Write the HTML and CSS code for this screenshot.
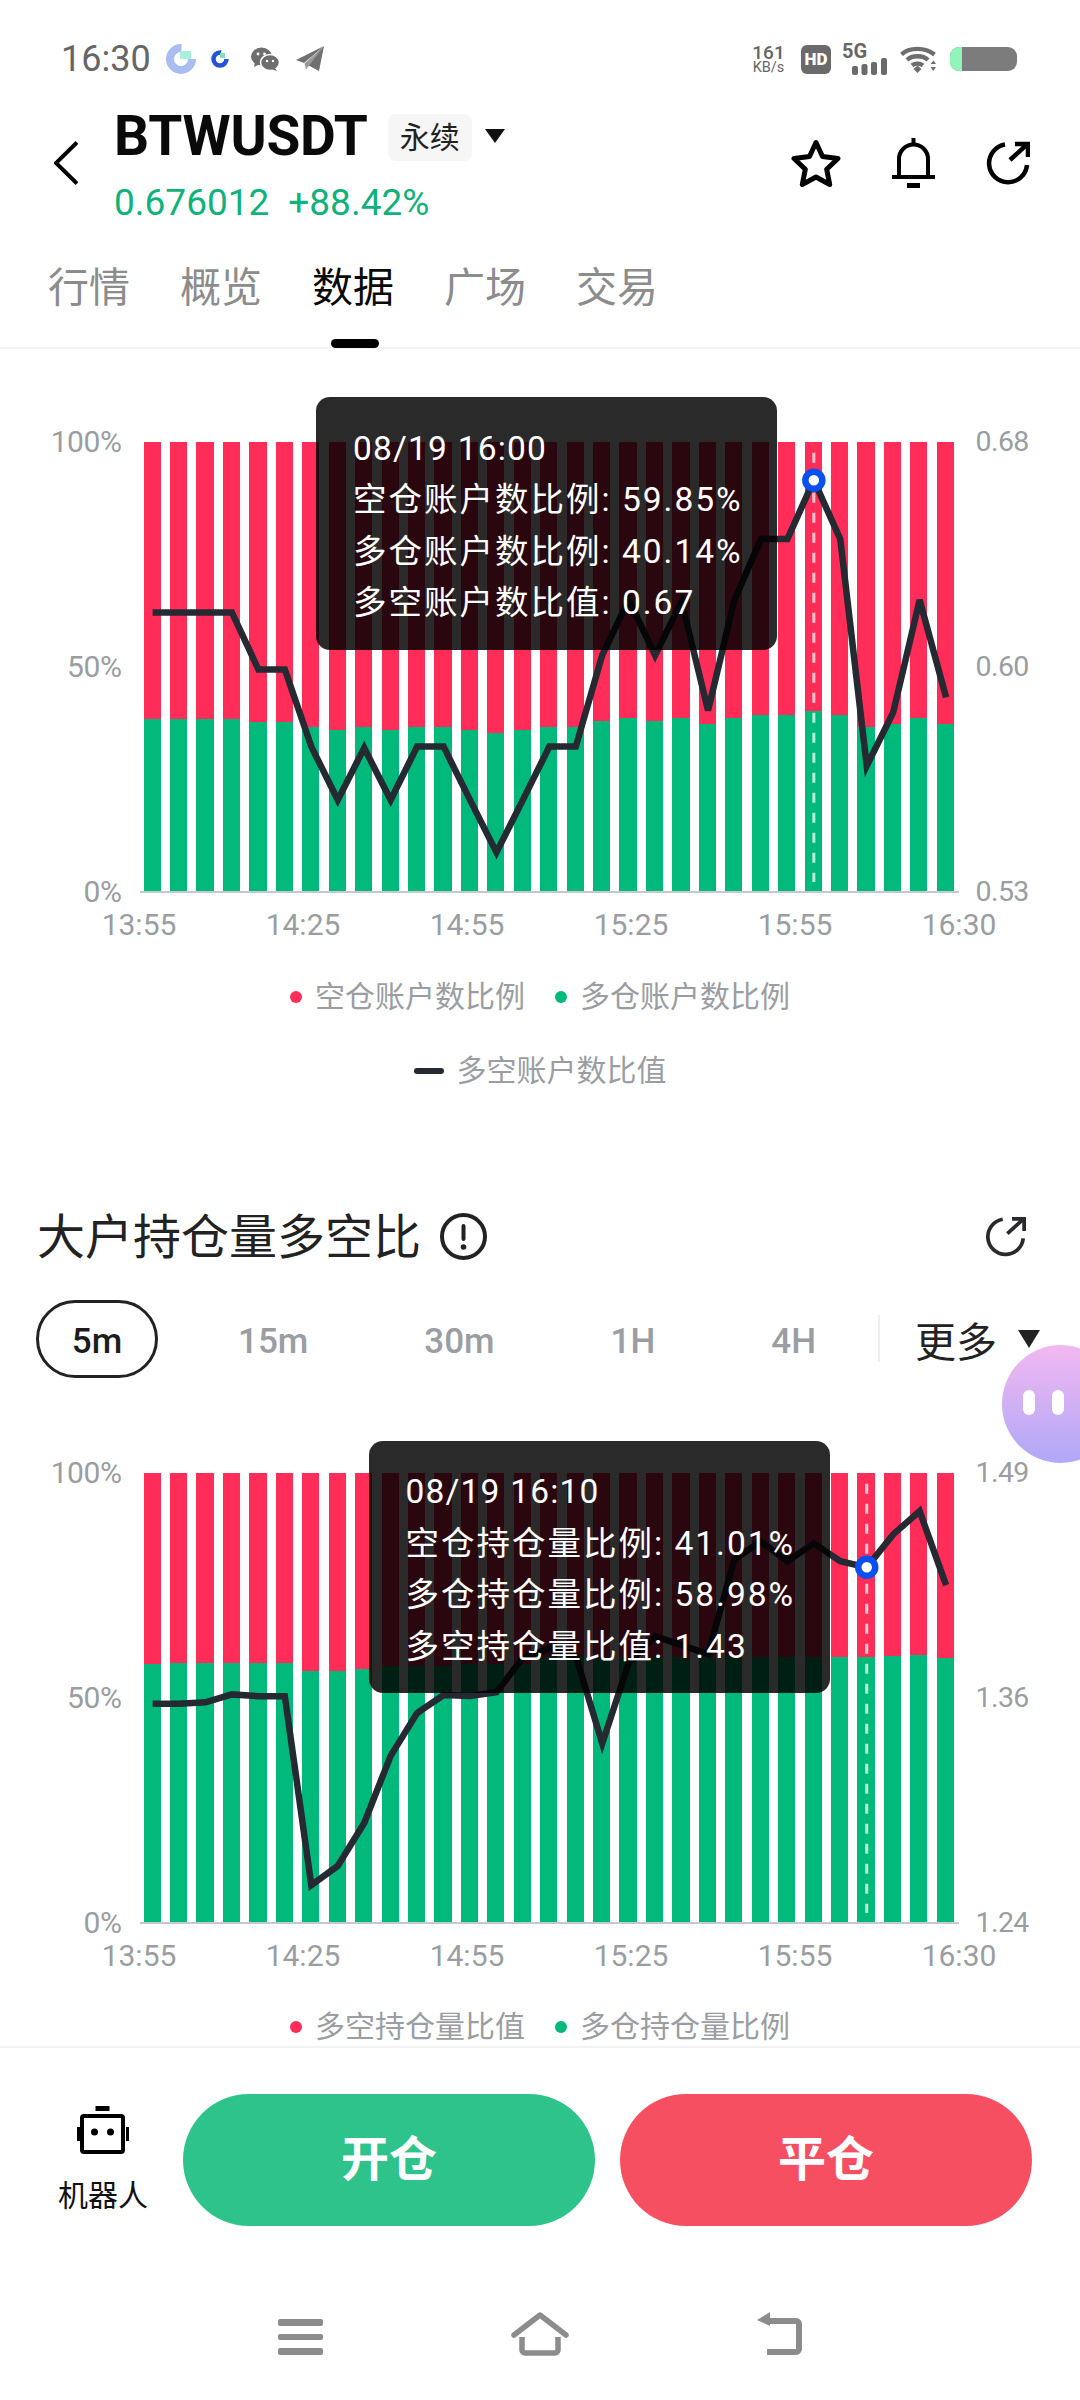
FILE: index.html
```html
<!DOCTYPE html>
<html lang="zh">
<head>
<meta charset="utf-8">
<title>BTWUSDT</title>
<link rel="stylesheet" href="styles.css">
</head>
<body>
<div class="app">
  <div class="status">
    <span class="time">16:30</span>
    <svg class="ic-ring" viewBox="0 0 30 30"><circle cx="15" cy="15" r="11" fill="none" stroke="#a9bdf0" stroke-width="8" stroke-dasharray="52 17.1"/><rect x="14" y="7" width="11" height="8" fill="#a8f0dc"/></svg>
    <svg class="ic-ring2" viewBox="0 0 18 18"><circle cx="9" cy="9" r="6.5" fill="none" stroke="#2453d6" stroke-width="4.5" stroke-dasharray="31 10"/><rect x="9" y="3" width="5" height="5" fill="#7fe0c0"/></svg>
    <svg class="ic-wechat" viewBox="0 0 28 24"><ellipse cx="10.5" cy="9.5" rx="10.5" ry="9" fill="#6e6e6e"/><path d="M4 15l-1 5 6-3z" fill="#6e6e6e"/><ellipse cx="19" cy="15.5" rx="9.5" ry="8" fill="#6e6e6e" stroke="#fff" stroke-width="1.5"/><path d="M24 21l2 3-6-2z" fill="#6e6e6e"/><circle cx="7" cy="7" r="1.4" fill="#fff"/><circle cx="13.5" cy="7" r="1.4" fill="#fff"/><circle cx="16" cy="14" r="1.2" fill="#fff"/><circle cx="22" cy="14" r="1.2" fill="#fff"/></svg>
    <svg class="ic-tele" viewBox="0 0 28 26"><path d="M28 0L0 14l8 3z" fill="#707070"/><path d="M28 0L10 18l13 7z" fill="#707070"/><path d="M28 0L8.5 17.5l1.5 6 3-4z" fill="#9a9a9a"/></svg>
    <div class="status-right">
      <div class="speed"><b>161</b><span>KB/s</span></div>
      <div class="hd">HD</div>
      <div class="net"><span>5G</span><svg viewBox="0 0 35 17" class="sig"><rect x="0" y="8" width="6" height="9" rx="2"/><rect x="9.500" y="6" width="6" height="11" rx="2"/><rect x="19" y="4" width="6" height="13" rx="2"/><rect x="29" y="0" width="6" height="17" rx="2"/></svg></div>
      <svg class="wifi" viewBox="0 0 36 28"><g fill="none" stroke="#6e6e6e" stroke-width="4.400"><path d="M1.500 9.500C9 2 25 2 34.500 9.500"/><path d="M7 15C12 10 23 10 28 15"/><path d="M12 20.500C15 18 20 18 23 20.500"/></g><path d="M13.500 24l4-3.500 4 3.500-4 4z" fill="#6e6e6e"/><path d="M30.500 19l3-3.500 2.500 3.500zM30.500 22h5.500l-2.700 4z" fill="#6e6e6e"/></svg>
      <div class="batt"><i></i></div>
    </div>
  </div>

  <div class="head">
    <svg class="back" viewBox="0 0 24 44"><path d="M23 1.500L2 22l21 20.500" fill="none" stroke="#000" stroke-width="4"/></svg>
    <div class="sym">
      <div class="sym-row">
        <span class="sym-name">BTWUSDT</span>
        <span class="tag">永续</span>
        <i class="caret"></i>
      </div>
      <div class="price"><span>0.676012</span><span>+88.42%</span></div>
    </div>
    <div class="head-icons">
      <svg class="ic-star" viewBox="0 0 50 48"><path d="M25 3.500l6.500 14 15.500 2-11.300 10.700 3 15.300L25 38l-13.700 7.500 3-15.300L3 19.500l15.500-2z" fill="none" stroke="#000" stroke-width="5" stroke-linejoin="round"/></svg>
      <svg class="ic-bell" viewBox="0 0 43 50"><g fill="none" stroke="#000" stroke-width="4"><path d="M7 38V21a14.500 14.500 0 0 1 29 0v17"/><path d="M0 39h43"/><path d="M21.500 0v6"/></g><rect x="15" y="45" width="13" height="5"/></svg>
      <svg class="ic-share" viewBox="0 0 44 44"><g fill="none" stroke="#000" stroke-width="4.500"><path d="M19 3.500A19 19 0 1 0 41 24"/><path d="M24 19L41.500 3"/><path d="M29 3h13v13"/></g></svg>
    </div>
  </div>

  <div class="tabs">
    <span class="tab">行情</span>
    <span class="tab">概览</span>
    <span class="tab on">数据</span>
    <span class="tab">广场</span>
    <span class="tab">交易</span>
  </div>

  <div class="content">
    <section class="sec-first">
      <div class="chart">
        <div class="yaxis left"><span>100%</span><span>50%</span><span>0%</span></div>
        <div class="plot">
          <div class="bar"><i style="height:38.5%"></i></div><div class="bar"><i style="height:38.5%"></i></div><div class="bar"><i style="height:38.5%"></i></div><div class="bar"><i style="height:38.5%"></i></div><div class="bar"><i style="height:37.7%"></i></div><div class="bar"><i style="height:37.7%"></i></div><div class="bar"><i style="height:36.7%"></i></div><div class="bar"><i style="height:36%"></i></div><div class="bar"><i style="height:36.7%"></i></div><div class="bar"><i style="height:36%"></i></div><div class="bar"><i style="height:36.7%"></i></div><div class="bar"><i style="height:36.7%"></i></div><div class="bar"><i style="height:36%"></i></div><div class="bar"><i style="height:35.2%"></i></div><div class="bar"><i style="height:36%"></i></div><div class="bar"><i style="height:36.7%"></i></div><div class="bar"><i style="height:36.7%"></i></div><div class="bar"><i style="height:37.9%"></i></div><div class="bar"><i style="height:38.7%"></i></div><div class="bar"><i style="height:37.9%"></i></div><div class="bar"><i style="height:38.7%"></i></div><div class="bar"><i style="height:37.2%"></i></div><div class="bar"><i style="height:38.7%"></i></div><div class="bar"><i style="height:39.4%"></i></div><div class="bar"><i style="height:39.4%"></i></div><div class="bar"><i style="height:40.1%"></i></div><div class="bar"><i style="height:39.4%"></i></div><div class="bar"><i style="height:36.6%"></i></div><div class="bar"><i style="height:37.2%"></i></div><div class="bar"><i style="height:38.7%"></i></div><div class="bar"><i style="height:37.4%"></i></div>
          <svg class="overlay" viewBox="0 0 810.7 450">
            <path class="cross" d="M669.850 10.700V440"/>
            <polyline class="line" points="8.600,170.400 35.050,170.400 61.500,170.400 87.950,170.400 114.400,227.500 140.850,227.500 167.300,304.600 193.750,357.900 220.200,306 246.650,357.900 273.100,304.600 299.550,304.600 326,357.900 352.450,410.400 378.900,357.900 405.350,304.600 431.800,304.600 458.250,213.200 484.700,157.900 511.150,213.200 537.600,159.600 564.050,268.600 590.500,157.900 616.950,97.100 643.400,97.100 669.850,38.200 696.300,97.100 722.750,323.900 749.200,270.400 775.650,157.900 802.100,255.400"/>
            <circle class="dot" cx="669.850" cy="38.200" r="8.500"/>
          </svg>
        </div>
        <div class="yaxis right"><span>0.68</span><span>0.60</span><span>0.53</span></div>
        <div class="xaxis"><span>13:55</span><span>14:25</span><span>14:55</span><span>15:25</span><span>15:55</span><span>16:30</span></div>
        <div class="tip tip-a">
          <div class="tip-date">08/19 16:00</div>
          <div>空仓账户数比例: 59.85%</div>
          <div>多仓账户数比例: 40.14%</div>
          <div>多空账户数比值: 0.67</div>
        </div>
      </div>
      <div class="legend"><span class="li"><i class="d red"></i>空仓账户数比例</span><span class="li"><i class="d green"></i>多仓账户数比例</span></div>
      <div class="legend two"><span class="li"><i class="dash"></i>多空账户数比值</span></div>
    </section>

    <section>
      <div class="sec-title">
        <h2>大户持仓量多空比</h2>
        <svg class="ic-info" viewBox="0 0 47 47"><circle cx="23.500" cy="23.500" r="21.500" fill="none" stroke="#222" stroke-width="4"/><rect x="21.500" y="11" width="4" height="17" rx="2" fill="#222"/><circle cx="23.500" cy="34" r="2.800" fill="#222"/></svg>
        <svg class="ic-share sm" viewBox="0 0 44 44"><g fill="none" stroke="#2a2a2e" stroke-width="4"><path d="M19 3.500A19 19 0 1 0 41 24"/><path d="M24 19L41.500 3"/><path d="M29 3h13v13"/></g></svg>
      </div>
      <div class="periods">
        <span class="pill">5m</span>
        <span class="per">15m</span>
        <span class="per">30m</span>
        <span class="per">1H</span>
        <span class="per">4H</span>
        <i class="sep"></i>
        <span class="more">更多</span>
        <i class="more-caret"></i>
      </div>
      <div class="chart">
        <div class="yaxis left"><span>100%</span><span>50%</span><span>0%</span></div>
        <div class="plot">
          <div class="bar"><i style="height:57.5%"></i></div><div class="bar"><i style="height:57.6%"></i></div><div class="bar"><i style="height:57.6%"></i></div><div class="bar"><i style="height:57.6%"></i></div><div class="bar"><i style="height:57.6%"></i></div><div class="bar"><i style="height:57.6%"></i></div><div class="bar"><i style="height:55.8%"></i></div><div class="bar"><i style="height:56%"></i></div><div class="bar"><i style="height:56.4%"></i></div><div class="bar"><i style="height:57.1%"></i></div><div class="bar"><i style="height:57.1%"></i></div><div class="bar"><i style="height:57.1%"></i></div><div class="bar"><i style="height:57.5%"></i></div><div class="bar"><i style="height:57.5%"></i></div><div class="bar"><i style="height:57.5%"></i></div><div class="bar"><i style="height:59%"></i></div><div class="bar"><i style="height:59%"></i></div><div class="bar"><i style="height:59%"></i></div><div class="bar"><i style="height:59%"></i></div><div class="bar"><i style="height:59%"></i></div><div class="bar"><i style="height:59%"></i></div><div class="bar"><i style="height:59%"></i></div><div class="bar"><i style="height:59%"></i></div><div class="bar"><i style="height:59%"></i></div><div class="bar"><i style="height:59%"></i></div><div class="bar"><i style="height:59%"></i></div><div class="bar"><i style="height:59%"></i></div><div class="bar"><i style="height:59%"></i></div><div class="bar"><i style="height:59.3%"></i></div><div class="bar"><i style="height:59.4%"></i></div><div class="bar"><i style="height:58.8%"></i></div>
          <svg class="overlay" viewBox="0 0 810.7 450">
            <path class="cross" d="M722.750 10.700V440"/>
            <polyline class="line" points="8.600,230.700 35.050,230.700 61.500,229.300 87.950,221.400 114.400,223.200 140.850,223.200 167.300,412.100 193.750,392.900 220.200,350 246.650,282.900 273.100,240 299.550,222.100 326,222.900 352.450,219.300 378.900,184.600 405.350,175.700 431.800,182.900 458.250,270.400 484.700,190 511.150,163.200 537.600,172.100 564.050,181 590.500,86.400 616.950,68.600 643.400,88.200 669.850,70.400 696.300,88.200 722.750,94.300 749.200,61.400 775.650,38.200 802.100,112.100"/>
            <circle class="dot" cx="722.750" cy="94.300" r="8.500"/>
          </svg>
        </div>
        <div class="yaxis right"><span>1.49</span><span>1.36</span><span>1.24</span></div>
        <div class="xaxis"><span>13:55</span><span>14:25</span><span>14:55</span><span>15:25</span><span>15:55</span><span>16:30</span></div>
        <div class="tip tip-b">
          <div class="tip-date">08/19 16:10</div>
          <div>空仓持仓量比例: 41.01%</div>
          <div>多仓持仓量比例: 58.98%</div>
          <div>多空持仓量比值: 1.43</div>
        </div>
      </div>
      <div class="legend"><span class="li"><i class="d red"></i>多空持仓量比值</span><span class="li"><i class="d green"></i>多仓持仓量比例</span></div>
    </section>
  </div>

  <div class="actions">
    <div class="robot">
      <svg viewBox="0 0 52 48" class="ic-robot"><rect x="18.500" y="0" width="14" height="5"/><rect x="5" y="10" width="41" height="36" rx="2" fill="none" stroke="#000" stroke-width="4"/><rect x="0" y="21" width="3" height="14"/><rect x="49" y="21" width="3" height="14"/><circle cx="17.500" cy="26" r="3.500"/><circle cx="33.500" cy="26" r="3.500"/></svg>
      <span>机器人</span>
    </div>
    <div class="btn buy">开仓</div>
    <div class="btn sell">平仓</div>
  </div>

  <div class="nav">
    <div class="nav-i"><div class="burger"><i></i><i></i><i></i></div></div>
    <div class="nav-i"><svg class="ic-home" viewBox="0 0 58 44"><g fill="none" stroke="#8c8c8c" stroke-width="5.500"><path d="M3 23L29 3l26 20" stroke-linejoin="round" stroke-linecap="round"/><path d="M11 25v13a3 3 0 0 0 3 3h30a3 3 0 0 0 3-3V25"/></g></svg></div>
    <div class="nav-i"><svg class="ic-ret" viewBox="0 0 48 44"><path d="M10 9H40a3 3 0 0 1 3 3V37a3 3 0 0 1-3 3H11" fill="none" stroke="#8c8c8c" stroke-width="6"/><path d="M14 0L1 8l13 6z" fill="#8c8c8c"/></svg></div>
  </div>

  <div class="bubble"><i></i><i></i></div>
</div>
</body>
</html>
```

FILE: styles.css
```css
* { box-sizing: border-box; }
html, body { margin: 0; padding: 0; }
body { width: 1080px; height: 2400px; overflow: hidden; background: #fff; font-family: Roboto, "Noto Sans CJK SC", sans-serif; color: #111; }
.app { position: relative; width: 1080px; height: 2400px; overflow: hidden; display: flex; flex-direction: column; }

/* status bar */
.status { height: 100px; padding: 18px 63px 0 61px; display: flex; align-items: center; flex: none; }
.time { font-size: 36px; color: #666; line-height: 40px; margin-right: 15px; }
.ic-ring { width: 30px; height: 30px; margin-right: 15px; }
.ic-ring2 { width: 18px; height: 18px; margin-right: 22px; }
.ic-wechat { width: 28px; height: 24px; margin-right: 17px; }
.ic-tele { width: 28px; height: 26px; }
.status-right { margin-left: auto; display: flex; align-items: center; }
.speed { display: flex; flex-direction: column; align-items: center; width: 33px; color: #666; margin-right: 16px; }
.speed b { font-size: 19px; line-height: 17px; font-weight: 500; }
.speed span { font-size: 14.5px; line-height: 14px; white-space: nowrap; }
.hd { width: 30px; height: 29px; border-radius: 6px; background: #6a6a6a; color: #fff; font-size: 17px; font-weight: 900; line-height: 29px; text-align: center; margin-right: 11px; }
.net { width: 45px; display: flex; flex-direction: column; color: #666; margin-right: 13px; }
.net span { font-size: 20px; line-height: 15px; font-weight: 700; }
.sig { width: 35px; height: 17px; margin: -1px 0 0 10px; fill: #6a6a6a; }
.wifi { width: 36px; height: 28px; margin-right: 14px; }
.batt { width: 67px; height: 24px; border-radius: 9px; background: #7c7c7c; overflow: hidden; }
.batt i { display: block; width: 12px; height: 24px; background: #8ff5b8; }

/* header */
.head { height: 125px; flex: none; display: flex; align-items: center; padding: 0 50px 0 54px; }
.back { width: 24px; height: 44px; margin-right: 38px; flex: none; }
.sym { display: flex; flex-direction: column; }
.sym-row { height: 70px; display: flex; align-items: center; margin-left: -2px; }
.sym-name { font-size: 55px; font-weight: 700; color: #0a0a0a; line-height: 70px; letter-spacing: -.2px; }
.tag { width: 84px; height: 47px; margin: 4px 0 0 20px; background: #f6f6f6; border-radius: 8px; font-size: 30px; line-height: 47px; text-align: center; color: #222; }
.caret { width: 0; height: 0; margin: 0 0 0 13px; border-style: solid; border-width: 14px 10.5px 0; border-color: #111 transparent transparent; }
.price { margin: 10px 0 0 -2px; height: 44px; display: flex; gap: 19px; font-size: 37px; line-height: 44px; color: #10b27c; }
.head-icons { margin-left: auto; display: flex; align-items: center; gap: 51px; }
.ic-star { width: 50px; height: 48px; }
.ic-bell { width: 43px; height: 50px; }
.ic-share { width: 44px; height: 44px; }

/* tabs */
.tabs { height: 124px; flex: none; display: flex; gap: 50px; padding-left: 48px; border-bottom: 2px solid #f3f3f3; }
.tab { position: relative; padding-top: 39px; font-size: 41px; line-height: 48px; color: #8c8c8c; }
.tab.on { color: #0a0a0a; }
.tab.on::after { content: ""; position: absolute; left: 19px; bottom: -1px; width: 48px; height: 9px; border-radius: 5px; background: #000; }

/* content */
.content { height: 1697px; flex: none; overflow: hidden; }
.sec-first { padding-top: 92.8px; }
.chart { position: relative; display: grid; grid-template-columns: 143.6px 810.7px 1fr; grid-template-rows: 450px auto; }
.plot { position: relative; display: flex; justify-content: space-between; height: 450px; }
.plot::after { content: ""; position: absolute; left: -4px; right: -5px; bottom: -1px; height: 2px; background: #c6c8cb; }
.bar { width: 17.2px; height: 100%; background: #ff2d58; display: flex; align-items: flex-end; }
.bar i { display: block; width: 100%; background: #02b97c; }
.overlay { position: absolute; left: 0; top: 0; width: 810.7px; height: 450px; overflow: visible; z-index: 1; }
.line { fill: none; stroke: #252932; stroke-width: 6.5; stroke-linejoin: miter; }
.cross { fill: none; stroke: rgba(255,255,255,.72); stroke-width: 3; stroke-dasharray: 10 10; }
.dot { fill: #fff; stroke: #0a50f0; stroke-width: 6.5; }
.yaxis { display: flex; flex-direction: column; justify-content: space-between; margin: -18px 0; font-size: 30px; line-height: 36px; color: #9a9da1; letter-spacing: -.4px; }
.yaxis.left { text-align: right; padding-right: 22px; }
.yaxis.right { padding-left: 21.3px; font-size: 28.5px; letter-spacing: -.6px; }
.xaxis { grid-column: 1 / -1; display: flex; padding-left: 57px; margin-top: 15px; font-size: 30px; line-height: 36px; color: #9a9da1; }
.xaxis span { width: 164px; text-align: center; }
.tip { position: absolute; z-index: 2; width: 461px; height: 252.6px; padding: 25.5px 20px 0 37px; border-radius: 14px; background: rgba(0,0,0,.835); color: #fff; font-size: 33.5px; line-height: 51.5px; letter-spacing: 2px; white-space: nowrap; }
.tip-date { letter-spacing: 1.2px; }
.tip-a { left: 316px; top: -44.8px; }
.tip-b { left: 368.5px; top: -31.9px; }
.legend { height: 44px; margin-top: 31.9px; display: flex; justify-content: center; gap: 30px; font-size: 30px; line-height: 44px; color: #9a9da1; }
.legend.two { margin-top: 30px; }
.li { display: flex; align-items: center; white-space: nowrap; }
.d { width: 12px; height: 12px; border-radius: 50%; margin-right: 13px; }
.d.red { background: #ff2d58; }
.d.green { background: #02b97c; }
.dash { width: 30px; height: 6px; border-radius: 3px; background: #252932; margin-right: 13px; }

.sec-title { margin-top: 119.7px; height: 48px; padding: 0 54px 0 37px; display: flex; align-items: center; }
.sec-title h2 { margin: 0 19px 0 0; padding-top: 3px; font-size: 48px; line-height: 48px; font-weight: 400; color: #222; white-space: nowrap; }
.ic-info { width: 47px; height: 47px; }
.ic-share.sm { width: 41px; height: 41px; margin-left: auto; }
.periods { margin-top: 39.3px; margin-bottom: 94.9px; height: 78px; padding-left: 36px; display: flex; align-items: center; gap: 116px; font-size: 35px; font-weight: 500; color: #9a9ea3; }
.pill { width: 122px; height: 78px; border: 3px solid #222; border-radius: 39px; color: #1c1c1c; line-height: 78px; text-align: center; margin-right: -36px; }
.per { padding-top: 5px; }
.sep { width: 2px; height: 47px; background: #eeeeee; margin: 0 -81px 0 -54px; }
.more { font-size: 41px; font-weight: 400; color: #222; }
.more-caret { width: 0; height: 0; margin-left: -95px; border-style: solid; border-width: 18px 11px 0; border-color: #222 transparent transparent; }

/* bottom actions */
.actions { height: 214px; flex: none; border-top: 2px solid #f3f3f3; padding: 46px 48px 0 58px; display: flex; align-items: flex-start; gap: 25px; }
.robot { width: 90px; margin-right: 10px; display: flex; flex-direction: column; align-items: center; padding-top: 12px; }
.ic-robot { width: 52px; height: 48px; }
.robot span { margin-top: 22px; font-size: 30px; line-height: 40px; color: #111; white-space: nowrap; }
.btn { flex: 1; height: 132px; border-radius: 66px; color: #fff; font-size: 48px; font-weight: 700; line-height: 132px; text-align: center; }
.buy { background: #2ec38a; }
.sell { background: #f74f62; }

/* nav */
.nav { flex: 1; padding: 52px 180px 0; display: grid; grid-template-columns: repeat(3, 240px); }
.nav-i { display: flex; justify-content: center; align-items: flex-start; }
.burger { width: 45px; height: 44px; padding-top: 7px; display: flex; flex-direction: column; gap: 8px; }
.burger i { display: block; height: 6.5px; border-radius: 2px; background: #8c8c8c; }
.ic-home { width: 58px; height: 44px; }
.ic-ret { width: 48px; height: 44px; }

.bubble { position: absolute; left: 1002px; top: 1345px; width: 118px; height: 118px; border-radius: 50%; background: linear-gradient(180deg, #f2b8f0, #b0a8f8); display: flex; gap: 17px; padding: 45px 0 0 21px; }
.bubble i { display: block; width: 12px; height: 25px; border-radius: 6px; background: #fff; }
```
